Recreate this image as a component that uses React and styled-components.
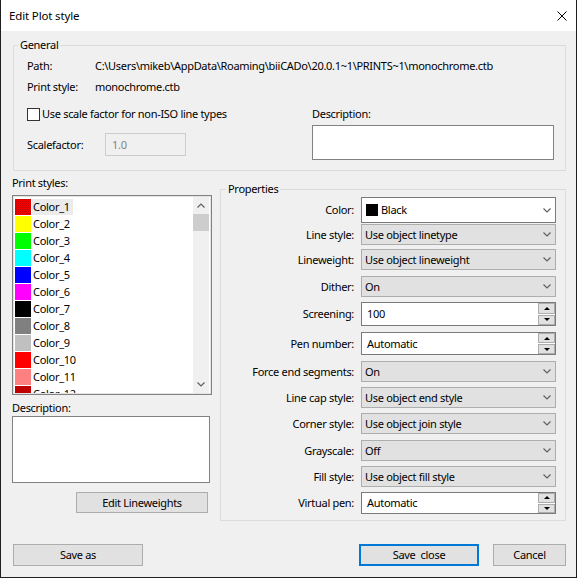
import React from 'react';
import styled, { createGlobalStyle } from 'styled-components';

const Global = createGlobalStyle`
  html, body { margin: 0; padding: 0; background: #fff; }
  body {
    font-family: "Noto Sans", "Segoe UI", sans-serif;
    font-size: 11px;
    line-height: 16px;
    letter-spacing: -0.3px;
    color: #000;
  }
  * { box-sizing: border-box; }
`;

const Window = styled.div`
  width: 577px;
  height: 578px;
  display: flex;
  flex-direction: column;
  background: #f0f0f0;
  border-left: 1px solid #1f1f1f;
  border-right: 1px solid #1f1f1f;
  border-bottom: 1px solid #1f1f1f;
  overflow: hidden;
`;

const TitleBar = styled.div`
  height: 31px;
  flex: none;
  background: #fff;
  display: flex;
  align-items: center;
  justify-content: space-between;
  padding-left: 8px;
  padding-right: 9px;
  font-size: 11.5px;
  letter-spacing: -0.15px;
`;

const Body = styled.div`
  flex: 1;
  display: flex;
  flex-direction: column;
  padding: 0 10px 0 11px;
`;

const Group = styled.fieldset`
  margin: ${p => p.$mt || 0}px 0 0 ${p => p.$ml || 0}px;
  padding: 0;
  min-width: 0;
  border: 1px solid #dcdcdc;
  flex: ${p => (p.$grow ? 1 : 'none')};
`;

const Legend = styled.legend`
  padding: 0 2px;
  margin-left: ${p => p.$indent}px;
  line-height: 16px;
`;

const GeneralBody = styled.div`
  padding: 5px 11px 10px 13px;
`;

const InfoGrid = styled.div`
  display: grid;
  grid-template-columns: 68px 1fr;
  row-gap: 5px;
  line-height: 16px;
  white-space: nowrap;
`;

const OptionsRow = styled.div`
  display: flex;
  align-items: flex-start;
  margin-top: 11px;
`;

const LeftOptions = styled.div`
  display: flex;
  flex-direction: column;
`;

const CheckRow = styled.label`
  display: flex;
  align-items: center;
  height: 16px;
  gap: 2px;
`;

const CheckBox = styled.span`
  width: 13px;
  height: 13px;
  border: 1px solid #333;
  background: #fff;
  flex: none;
`;

const ScaleRow = styled.div`
  display: flex;
  align-items: center;
  height: 23px;
  margin-top: 11px;
`;

const ScaleLabel = styled.span`
  width: 78px;
`;

const DisabledInput = styled.div`
  width: 81px;
  height: 23px;
  border: 1px solid #cccccc;
  background: #f0f0f0;
  color: #838383;
  padding-left: 6px;
  display: flex;
  align-items: center;
`;

const DescBlock = styled.div`
  margin-left: auto;
  width: 242px;
  display: flex;
  flex-direction: column;
`;

const TextBox = styled.div`
  width: ${p => p.$w}px;
  height: ${p => p.$h}px;
  margin-top: ${p => p.$mt || 0}px;
  background: #fff;
  border: 1px solid #828282;
`;

const Columns = styled.div`
  display: flex;
  gap: 7px;
  margin-top: 4px;
`;

const LeftCol = styled.div`
  width: 201px;
  flex: none;
  display: flex;
  flex-direction: column;
`;

const FieldLabel = styled.div`
  height: 16px;
  margin-top: ${p => p.$mt || 0}px;
`;

const ListBox = styled.div`
  margin-top: 4px;
  width: 200px;
  height: 200px;
  border: 1px solid #828282;
  box-shadow: inset 0 0 0 1px #e3e3e3;
  background: #fff;
  padding: 1px 2px 1px 1px;
  display: flex;
`;

const ListItems = styled.div`
  flex: 1;
  overflow: hidden;
  padding: 2px 0 0 1px;
`;

const Item = styled.div`
  height: 17px;
  display: flex;
  align-items: flex-start;
`;

const Swatch = styled.span`
  width: 16px;
  height: 16px;
  flex: none;
  background-color: ${p => p.$c};
  ${p => p.$focus && `
    background-image: conic-gradient(#c80000 25%, transparent 0 50%, #c80000 0 75%, transparent 0);
    background-size: 2px 2px;
  `}
`;

const ItemText = styled.span`
  margin-left: 1px;
  padding: 0 3px 0 1px;
  height: 16px;
  line-height: 16px;
  background: ${p => (p.$sel ? '#ebebeb' : 'transparent')};
`;

const ScrollBar = styled.div`
  width: 16px;
  flex: none;
  background: #f0f0f0;
  display: flex;
  flex-direction: column;
`;

const ScrollArrow = styled.div`
  height: 17px;
  display: flex;
  align-items: center;
  justify-content: center;
`;

const Thumb = styled.div`
  height: 17px;
  background: #cdcdcd;
`;

const ScrollTrack = styled.div`
  flex: 1;
`;

const Button = styled.button`
  font: inherit;
  letter-spacing: inherit;
  color: #000;
  width: ${p => p.$w}px;
  height: ${p => p.$h || 22}px;
  margin-top: ${p => p.$mt || 0}px;
  background: #e1e1e1;
  border: ${p => (p.$default ? '2px solid #0078d7' : '1px solid #adadad')};
  padding: 0;
  white-space: pre;
  display: flex;
  align-items: center;
  justify-content: center;
  flex: none;
`;

const EditButton = styled(Button)`
  align-self: flex-end;
  margin-right: 5px;
`;

const PropsBody = styled.div`
  padding: 0 9px 6px 0;
  display: flex;
  flex-direction: column;
`;

const PropRow = styled.div`
  display: flex;
  align-items: center;
  height: ${p => p.$h}px;
  margin-top: ${p => p.$mt}px;
`;

const PropLabel = styled.span`
  width: 133px;
  margin-right: 7px;
  text-align: right;
  white-space: nowrap;
`;

const Combo = styled.div`
  flex: 1;
  height: 100%;
  display: flex;
  align-items: center;
  background: ${p => (p.$white ? '#fff' : '#e1e1e1')};
  border: 1px solid ${p => (p.$white ? '#7a7a7a' : '#adadad')};
  padding-left: ${p => (p.$white ? 4 : 3)}px;
  padding-right: 4px;
`;

const ComboText = styled.span`
  flex: 1;
  white-space: nowrap;
`;

const ColorChip = styled.span`
  width: 12px;
  height: 12px;
  background: #000;
  margin-right: 3px;
  flex: none;
`;

const SpinBox = styled.div`
  flex: 1;
  height: 100%;
  display: flex;
  background: #fff;
  border: 1px solid #7a7a7a;
`;

const SpinText = styled.span`
  flex: 1;
  padding-left: 5px;
  display: flex;
  align-items: center;
`;

const SpinButtons = styled.div`
  width: 17px;
  display: flex;
  flex-direction: column;
  gap: 1px;
`;

const SpinBtn = styled.div`
  flex: 1;
  background: #e1e1e1;
  border: 1px solid #adadad;
  display: flex;
  align-items: center;
  justify-content: center;
  &::after {
    content: '';
    border-left: 3px solid transparent;
    border-right: 3px solid transparent;
    ${p => (p.$down ? 'border-top: 3px solid #000;' : 'border-bottom: 3px solid #000;')}
  }
`;

const Footer = styled.div`
  display: flex;
  align-items: center;
  margin-top: 23px;
  padding-left: 1px;
`;

const FooterRight = styled.div`
  margin-left: auto;
  display: flex;
  gap: 14px;
`;

const Chevron = ({ up, color = '#606060' }) => (
  <svg width="8" height="5" viewBox="0 0 8 5">
    <polyline
      points={up ? '0.5,4.5 4,1 7.5,4.5' : '0.5,0.5 4,4 7.5,0.5'}
      fill="none"
      stroke={color}
      strokeWidth="1.2"
    />
  </svg>
);

const colors = [
  '#ff0000', '#ffff00', '#00ff00', '#00ffff', '#0000ff', '#ff00ff',
  '#000000', '#808080', '#c0c0c0', '#ff0000', '#ff8080', '#c00000',
];

const rows = [
  { label: 'Color:', kind: 'color', value: 'Black', h: 26, mt: 0 },
  { label: 'Line style:', kind: 'combo', value: 'Use object linetype', h: 21, mt: 1 },
  { label: 'Lineweight:', kind: 'combo', value: 'Use object lineweight', h: 21, mt: 4 },
  { label: 'Dither:', kind: 'combo', value: 'On', h: 21, mt: 6 },
  { label: 'Screening:', kind: 'spin', value: '100', h: 24, mt: 5 },
  { label: 'Pen number:', kind: 'spin', value: 'Automatic', h: 23, mt: 6 },
  { label: 'Force end segments:', kind: 'combo', value: 'On', h: 21, mt: 6 },
  { label: 'Line cap style:', kind: 'combo', value: 'Use object end style', h: 21, mt: 5 },
  { label: 'Corner style:', kind: 'combo', value: 'Use object join style', h: 21, mt: 5 },
  { label: 'Grayscale:', kind: 'combo', value: 'Off', h: 21, mt: 6 },
  { label: 'Fill style:', kind: 'combo', value: 'Use object fill style', h: 21, mt: 5 },
  { label: 'Virtual pen:', kind: 'spin', value: 'Automatic', h: 22, mt: 5 },
];

function Control({ row }) {
  if (row.kind === 'spin') {
    return (
      <SpinBox>
        <SpinText>{row.value}</SpinText>
        <SpinButtons>
          <SpinBtn />
          <SpinBtn $down />
        </SpinButtons>
      </SpinBox>
    );
  }
  const white = row.kind === 'color';
  return (
    <Combo $white={white}>
      {white && <ColorChip />}
      <ComboText>{row.value}</ComboText>
      <Chevron />
    </Combo>
  );
}

export default function App() {
  return (
    <>
      <Global />
      <Window>
        <TitleBar>
          <span>Edit Plot style</span>
          <svg width="10" height="10" viewBox="0 0 10 10">
            <path d="M0.5 0.5 L9.5 9.5 M9.5 0.5 L0.5 9.5" stroke="#000" strokeWidth="1" />
          </svg>
        </TitleBar>
        <Body>
          <Group $mt={6} $ml={1}>
            <Legend $indent={4}>General</Legend>
            <GeneralBody>
              <InfoGrid>
                <span>Path:</span>
                <span>C:\Users\mikeb\AppData\Roaming\biiCADo\20.0.1~1\PRINTS~1\monochrome.ctb</span>
                <span>Print style:</span>
                <span>monochrome.ctb</span>
              </InfoGrid>
              <OptionsRow>
                <LeftOptions>
                  <CheckRow>
                    <CheckBox />
                    <span>Use scale factor for non-ISO line types</span>
                  </CheckRow>
                  <ScaleRow>
                    <ScaleLabel>Scalefactor:</ScaleLabel>
                    <DisabledInput>1.0</DisabledInput>
                  </ScaleRow>
                </LeftOptions>
                <DescBlock>
                  <FieldLabel>Description:</FieldLabel>
                  <TextBox $w={242} $h={35} $mt={3} />
                </DescBlock>
              </OptionsRow>
            </GeneralBody>
          </Group>

          <Columns>
            <LeftCol>
              <FieldLabel>Print styles:</FieldLabel>
              <ListBox>
                <ListItems>
                  {colors.map((c, i) => (
                    <Item key={i}>
                      <Swatch $c={c} $focus={i === 0} />
                      <ItemText $sel={i === 0}>Color_{i + 1}</ItemText>
                    </Item>
                  ))}
                </ListItems>
                <ScrollBar>
                  <ScrollArrow><Chevron up /></ScrollArrow>
                  <Thumb />
                  <ScrollTrack />
                  <ScrollArrow><Chevron /></ScrollArrow>
                </ScrollBar>
              </ListBox>
              <FieldLabel $mt={5}>Description:</FieldLabel>
              <TextBox $w={198} $h={67} />
              <EditButton $w={132} $h={21} $mt={9}>Edit Lineweights</EditButton>
            </LeftCol>

            <Group $mt={6} $grow>
              <Legend $indent={5}>Properties</Legend>
              <PropsBody>
                {rows.map(r => (
                  <PropRow key={r.label} $h={r.h} $mt={r.mt}>
                    <PropLabel>{r.label}</PropLabel>
                    <Control row={r} />
                  </PropRow>
                ))}
              </PropsBody>
            </Group>
          </Columns>

          <Footer>
            <Button $w={130}>Save as</Button>
            <FooterRight>
              <Button $w={120} $default>{'Save  close'}</Button>
              <Button $w={73}>Cancel</Button>
            </FooterRight>
          </Footer>
        </Body>
      </Window>
    </>
  );
}
